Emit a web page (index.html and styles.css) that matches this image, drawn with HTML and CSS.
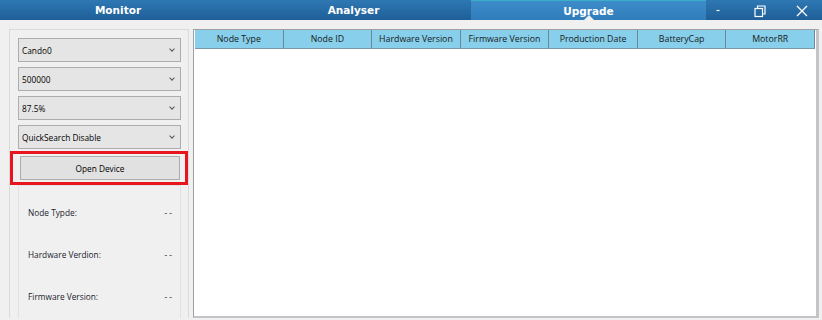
FILE: index.html
```html
<!DOCTYPE html>
<html>
<head>
<meta charset="utf-8">
<link rel="stylesheet" href="styles.css">
</head>
<body>
<div class="app">
  <div class="titlebar">
    <div class="tab">Monitor</div>
    <div class="tab">Analyser</div>
    <div class="tab active">Upgrade</div>
    <div class="controls">
      <span class="ctl"><svg width="12" height="14" viewBox="0 0 12 14"><path d="M4.5 6.5h3" stroke="#fff" stroke-width="1.2"/></svg></span>
      <span class="ctl"><svg width="14" height="14" viewBox="0 0 14 14"><rect x="2" y="4.5" width="7.5" height="8" fill="none" stroke="#fff" stroke-width="1.2"/><path d="M4.5 4.5V2h7.5v8h-2.5" fill="none" stroke="#fff" stroke-width="1.2"/></svg></span>
      <span class="ctl"><svg width="14" height="14" viewBox="0 0 14 14"><path d="M2 2l10 10M12 2L2 12" stroke="#fff" stroke-width="1.3"/></svg></span>
    </div>
  </div>
  <div class="main">
    <div class="side">
      <div class="combo">Cando0<span class="chev"></span></div>
      <div class="combo">500000<span class="chev"></span></div>
      <div class="combo">87.5%<span class="chev"></span></div>
      <div class="combo">QuickSearch Disable<span class="chev"></span></div>
      <div class="highlight"><div class="btn">Open Device</div></div>
      <div class="info">
        <div class="row"><span>Node Typde:</span><span>- -</span></div>
        <div class="row"><span>Hardware Verdion:</span><span>- -</span></div>
        <div class="row"><span>Firmware Version:</span><span>- -</span></div>
      </div>
    </div>
    <div class="table">
      <div class="thead">
        <div class="th">Node Type</div>
        <div class="th">Node ID</div>
        <div class="th">Hardware Version</div>
        <div class="th">Firmware Version</div>
        <div class="th">Production Date</div>
        <div class="th">BatteryCap</div>
        <div class="th">MotorRR</div>
      </div>
    </div>
  </div>
</div>
</body>
</html>
```
FILE: styles.css
```css
* { box-sizing: border-box; }
html, body { margin: 0; padding: 0; }
body {
  width: 822px;
  height: 320px;
  overflow: hidden;
  background: #f0f0f0;
  font-family: "Open Sans", "Noto Sans", sans-serif;
  font-size: 8.3px;
  color: #000;
}
.app { width: 822px; height: 320px; display: flex; flex-direction: column; }
.titlebar {
  height: 20px;
  display: flex;
  background: linear-gradient(#2e78b4, #1f5f98);
  flex: none;
}
.tab {
  width: 235px;
  display: flex;
  align-items: center;
  justify-content: center;
  color: #fff;
  font-family: "DejaVu Sans", sans-serif;
  font-weight: bold;
  font-size: 10.5px;
  position: relative;
}
.tab:first-child { width: 236px; }
.tab.active {
  background: linear-gradient(#3d8bc8, #2f7dba);
  border-top: 1px solid #3ab0c8;
}
.tab.active::after {
  content: "";
  position: absolute;
  left: 50%;
  bottom: 0;
  margin-left: -5px;
  border-left: 5px solid transparent;
  border-right: 5px solid transparent;
  border-bottom: 5px solid #f0f0f0;
}
.controls {
  flex: 1;
  display: flex;
  align-items: center;
  gap: 18px;
  padding-top: 1px;
}
.ctl { display: flex; width: 24px; justify-content: center; align-items: center; }
.main {
  flex: 1;
  display: flex;
  gap: 4px;
  padding: 9px 3px 2px 9px;
  min-height: 0;
}
.side {
  width: 180px;
  border: 1px solid #dadada;
  border-bottom: none;
  display: flex;
  flex-direction: column;
  padding: 8px 7px 0 8px;
  gap: 5px;
}
.combo {
  height: 24px;
  flex: none;
  border: 1px solid #adadad;
  background: #e5e5e5;
  display: flex;
  align-items: center;
  padding-left: 3px;
  position: relative;
}
.chev {
  position: absolute;
  right: 6px;
  top: 8px;
  width: 4px;
  height: 4px;
  border-right: 1px solid #555;
  border-bottom: 1px solid #555;
  transform: rotate(45deg);
}
.highlight {
  flex: none;
  margin: -3px -7px 0 -8px;
  border: 3px solid #e8141e;
  padding: 2px 5px 2px 7px;
}
.btn {
  height: 24px;
  border: 1px solid #adadad;
  background: #e1e1e1;
  display: flex;
  align-items: center;
  justify-content: center;
}
.info {
  flex: 1;
  border: 1px solid #e2e2e2;
  border-bottom: none;
  margin-top: -5px;
  padding: 19px 8px 0 9px;
  display: flex;
  flex-direction: column;
  gap: 27px;
  font-size: 8.3px;
  color: #1a1a2e;
}
.row { display: flex; justify-content: space-between; height: 15px; align-items: center; }
.table {
  flex: 1;
  background: #fff;
  border: 1px solid #a0a0a0;
  border-right: 3px solid #c4c4c8;
  border-bottom: 2px solid #c4c4c8;
  padding: 0 1px 0 1px;
}
.thead {
  display: grid;
  grid-template-columns: repeat(7, 1fr);
  height: 19px;
  background: #87cfeb;
  border-bottom: 1px solid #7a9aaa;
}
.th {
  display: flex;
  align-items: center;
  justify-content: center;
  border-right: 1px solid #6a8898;
  font-size: 8.8px;
  color: #1a1a1a;
}
```
